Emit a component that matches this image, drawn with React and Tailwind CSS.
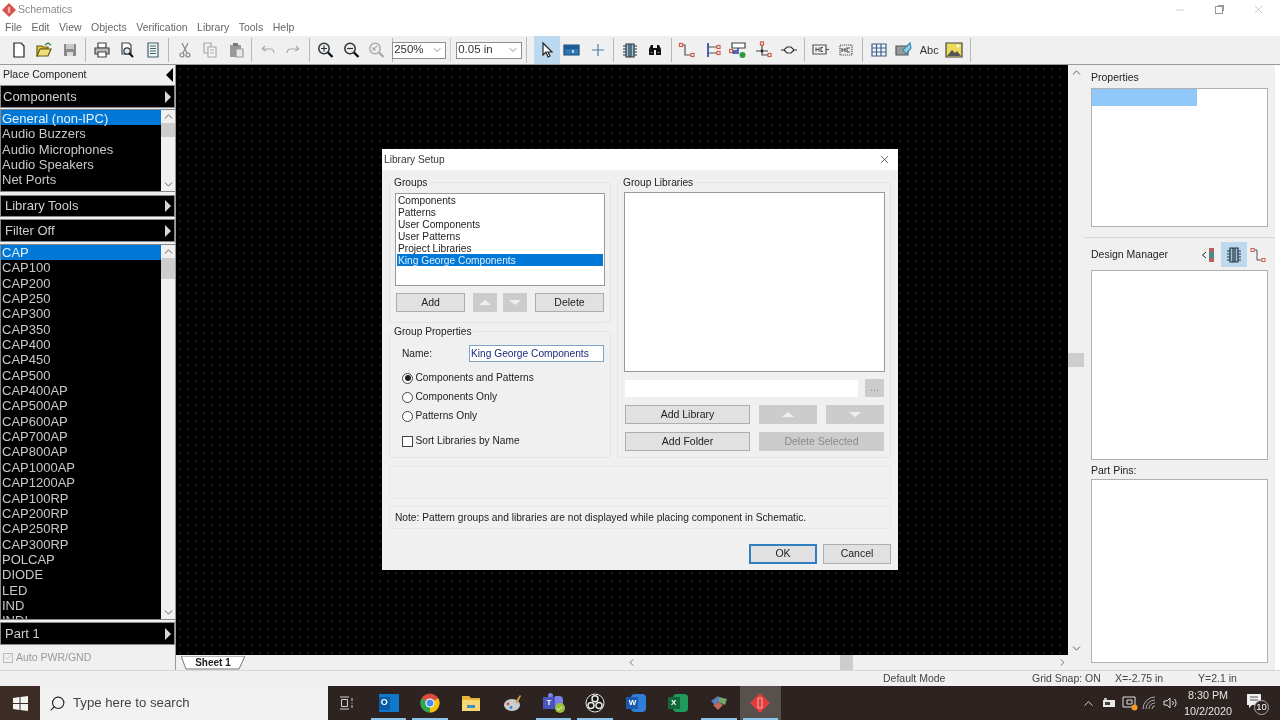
import React from "react";
import {
  ChevronDown,
  ChevronUp,
  ChevronLeft,
  ChevronRight,
  Search,
  Minus,
  X,
  Check,
} from "lucide-react";

const FONT = "font-['Liberation_Sans','Arial',sans-serif]";

const Slot = ({ children, active }) => (
  <div className={`flex h-[28px] shrink-0 items-center justify-center ${active ? "w-[26px] bg-[#bcd9f0]" : "w-[25.3px]"}`}>
    {children}
  </div>
);

const Sep = () => (
  <div className="flex h-[28px] w-[7px] shrink-0 justify-center py-[2px]">
    <div className="w-px bg-[#b8b8b8]" />
  </div>
);

const Ico = ({ children, size = 18 }) => (
  <svg width={size} height={size} viewBox="0 0 18 18" fill="none" strokeWidth="1.2">
    {children}
  </svg>
);

const toolGroups = [
  [
    <Ico><path d="M4 2h7l3 3v11H4z" fill="#fff" stroke="#222" /></Ico>,
    <Ico><path d="M2 5h5l1 1h5v2H6l-3 7H2z" fill="#e8c84a" stroke="#665a10" /><path d="M5 8h11l-3 7H2z" fill="#f3de7c" stroke="#665a10" /><path d="M10 4l3-2 3 2" stroke="#2c7a2c" /></Ico>,
    <Ico><path d="M3 3h12v12H3z" fill="#8a8a8a" /><path d="M5 3h8v5H5z" fill="#c8c8c8" /><path d="M6 11h6v4H6z" fill="#dcdcdc" /></Ico>,
  ],
  [
    <Ico><path d="M5 2h8v5H5z" fill="#fff" stroke="#444" /><path d="M2 7h14v6H2z" fill="#bbb" stroke="#444" /><path d="M5 11h8v5H5z" fill="#fff" stroke="#444" /></Ico>,
    <Ico><path d="M4 2h7l2 2v9H4z" fill="#fff" stroke="#444" /><circle cx="9" cy="10" r="3.2" fill="#dcebf5" stroke="#333" /><path d="M11 12l4 4" stroke="#111" strokeWidth="2" /></Ico>,
    <Ico><path d="M4 2h10v14H4z" fill="#eef5f5" stroke="#44606a" /><path d="M6 5h6M6 7.5h6M6 10h6M6 12.5h6" stroke="#44606a" /></Ico>,
  ],
  [
    <Ico><circle cx="6" cy="14" r="2" stroke="#888" /><circle cx="12" cy="14" r="2" stroke="#888" /><path d="M7 12L12 2M11 12L6 2" stroke="#888" /></Ico>,
    <Ico><path d="M3 2h7v10H3z" fill="#eee" stroke="#aaa" /><path d="M7 6h8v10H7z" fill="#f5f5f5" stroke="#aaa" /><path d="M9 9h4M9 12h4" stroke="#aaa" /></Ico>,
    <Ico><path d="M3 4h11v12H3z" fill="#9a9a9a" /><path d="M6 2h5v3H6z" fill="#777" /><path d="M9 8h7v8H9z" fill="#e8e8e8" stroke="#999" /></Ico>,
  ],
  [
    <Ico><path d="M3 8l3-3M3 8l4 2M3 8h8c3 0 4 2 4 4" stroke="#aaa" /></Ico>,
    <Ico><path d="M15 8l-3-3M15 8l-4 2M15 8H7c-3 0-4 2-4 4" stroke="#aaa" /></Ico>,
  ],
  [
    <Ico><circle cx="8" cy="7.5" r="5.2" fill="#e6f0f6" stroke="#333" strokeWidth="1.5" /><path d="M5 7.5h6M8 4.5v6" stroke="#333" /><path d="M12 11.5l4.5 4.5" stroke="#111" strokeWidth="2.4" /></Ico>,
    <Ico><circle cx="8" cy="7.5" r="5.2" fill="#e6f0f6" stroke="#333" strokeWidth="1.5" /><path d="M5 7.5h6" stroke="#333" /><path d="M12 11.5l4.5 4.5" stroke="#111" strokeWidth="2.4" /></Ico>,
    <Ico><circle cx="8" cy="7.5" r="5.2" fill="#f2f2f2" stroke="#aaa" strokeWidth="1.5" /><path d="M10 5L6 9M6 6v3h3" stroke="#aaa" /><path d="M12 11.5l4.5 4.5" stroke="#aaa" strokeWidth="2.4" /></Ico>,
  ],
];

const pickTools = [
  <Ico><path d="M5 2v12l3-3 2 5 2-1-2-4h4z" fill="#fff" stroke="#222" /></Ico>,
  <Ico><path d="M1 4h15v10H1z" fill="#2f78b8" stroke="#1b4a78" /><path d="M2 5h13v3H2z" fill="#1d5a94" /><path d="M10 9v3M9 10h1" stroke="#fff" /></Ico>,
  <Ico><path d="M9 3v12M3 9h12" stroke="#4a7fa8" /></Ico>,
];

const wireTools = [
  <Ico><path d="M3 4h4v10h7" stroke="#555" /><rect x="1.5" y="2.5" width="3" height="3" fill="#fff" stroke="#d05a4a" /><rect x="13" y="12.5" width="3" height="3" fill="#fff" stroke="#d05a4a" /></Ico>,
  <Ico><path d="M4 2v14" stroke="#1c3fa8" strokeWidth="1.6" /><path d="M4 6h9M4 12h9" stroke="#555" /><rect x="13" y="4.5" width="3" height="3" fill="#fff" stroke="#d05a4a" /><rect x="13" y="10.5" width="3" height="3" fill="#fff" stroke="#d05a4a" /></Ico>,
  <Ico><path d="M3 2h13v5H3z" fill="#fff" stroke="#444" /><path d="M9 7v3H4v2h6" stroke="#1c3fa8" strokeWidth="1.4" /><rect x="0.5" y="8.5" width="3" height="3" fill="#fff" stroke="#d05a4a" /><circle cx="13.5" cy="14" r="3" fill="#2f9a3c" /></Ico>,
  <Ico><path d="M8 4v10h6M2 10h12" stroke="#444" /><rect x="6.5" y="1" width="3" height="3" fill="#fff" stroke="#d05a4a" /><circle cx="8" cy="10" r="1.4" fill="#222" /><rect x="14" y="12.5" width="3" height="3" fill="#fff" stroke="#d05a4a" /></Ico>,
  <Ico><path d="M1 9h3l3-3h4l3 3h3M4 9l3 3h4l3-3" stroke="#333" /></Ico>,
];

const chipTools = [
  <Ico><path d="M1 4h13v9H1z" fill="#eef2f5" stroke="#555" /><path d="M14 8.5h3" stroke="#555" /><path d="M4 6.5v4M7 6.5v4M4 8.5h3M11 6.5H9v4h2" stroke="#555" /></Ico>,
  <Ico><path d="M3 4h12v10H3z" fill="#eee" stroke="#555" strokeDasharray="1.2 0.8" /><path d="M5 7v4M8 7v4M5 9h3M13 7h-3v4h3" stroke="#555" /></Ico>,
];

const miscTools = [
  <Ico><path d="M2 3h14v12H2z" fill="#f2f6fa" stroke="#3d5f8a" /><path d="M2 7h14M2 11h14M6.5 3v12M11 3v12" stroke="#3d5f8a" /></Ico>,
  <Ico><path d="M1 5h12v9H1z" fill="#9a9a9a" stroke="#555" /><path d="M8 9l7-7 1 5-5 6z" fill="#8fd0e4" stroke="#3a8aa8" /></Ico>,
  null,
  <Ico><path d="M1 2h16v14H1z" fill="#eadb5a" stroke="#444" /><path d="M2 15l5-6 3 3 2-2 4 5z" fill="#555" /><circle cx="13" cy="5" r="1.4" fill="#fff" /></Ico>,
];

const Combo = ({ value, className }) => (
  <div className={`flex h-[17px] shrink-0 items-center justify-between border border-[#8e8e8e] bg-white pl-[1px] pr-[2px] text-[11.5px] text-[#333] ${className}`}>
    <span>{value}</span>
    <ChevronDown size={12} strokeWidth={1.3} className="text-[#555]" />
  </div>
);

const BlackBar = ({ label, className = "" }) => (
  <div className={`flex items-center justify-between border border-[#8a8a8a] bg-black pl-[4px] pr-[3px] text-[13px] text-[#cfcfcf] ${className}`}>
    <span>{label}</span>
    <div className="h-0 w-0 border-y-[6px] border-l-[6px] border-y-transparent border-l-[#d8d8d8]" />
  </div>
);

const ListBox = ({ items, className = "", thumbH = "h-[14px]", rowLeading = "leading-[15.35px]" }) => (
  <div className={`flex overflow-hidden border-y border-l border-[#888] ${className}`}>
    <div className="w-[160px] shrink-0 overflow-hidden bg-black pl-[1px] text-[13px] text-[#c8c8c8]">
      {items.map((it, i) => (
        <div key={it} className={`h-[15.35px] whitespace-nowrap ${rowLeading} ${i === 0 ? "-ml-[1px] bg-[#0078d7] pl-[1px] text-[#e4f0fa]" : ""}`}>
          {it}
        </div>
      ))}
    </div>
    <div className="flex flex-1 flex-col items-center bg-[#f0f0f0] text-[#444]">
      <ChevronUp size={13} strokeWidth={1.5} />
      <div className={`w-full bg-[#cdcdcd] ${thumbH}`} />
      <div className="flex-1" />
      <ChevronDown size={13} strokeWidth={1.5} />
    </div>
  </div>
);

const Btn = ({ children, className = "", disabled }) => (
  <div className={`flex items-center justify-center text-[10.5px] ${disabled ? "bg-[#cccccc] text-[#8a8a8a]" : "border border-[#adadad] bg-[#e1e1e1] text-[#222]"} ${className}`}>
    {children}
  </div>
);

const Arrow = ({ up }) => (
  <div className={`h-0 w-0 border-x-[6px] border-x-transparent ${up ? "border-b-[5px] border-b-[#f0f0f0]" : "border-t-[5px] border-t-[#f0f0f0]"}`} />
);

const Radio = ({ label, checked, className = "" }) => (
  <div className={`flex h-[14px] items-center gap-[2.5px] ${className}`}>
    <div className="flex h-[11px] w-[11px] items-center justify-center rounded-full border border-[#444] bg-white">
      {checked && <div className="h-[6px] w-[6px] rounded-full bg-[#222]" />}
    </div>
    <span>{label}</span>
  </div>
);

const Legend = ({ children, className = "ml-[2px]" }) => (
  <div className={`-mt-[7px] w-fit bg-[#f0f0f0] px-[2px] leading-[13px] ${className}`}>{children}</div>
);

const LibraryDialog = () => (
  <div className="absolute left-[382px] top-[149px] flex h-[421px] w-[516px] flex-col bg-[#f0f0f0] text-[10.2px] text-[#222]">
    <div className="flex h-[21px] items-center justify-between bg-white pl-[2px] pr-[7px] text-[#333]">
      <span>Library Setup</span>
      <X size={13} strokeWidth={1.2} className="text-[#222]" />
    </div>
    <div className="flex flex-col px-[7px]">
      <div className="mt-[12px] flex gap-[6px]">
        <div className="flex h-[276px] w-[222px] flex-col gap-[8px]">
          <div className="h-[141px] shrink-0 rounded-sm border border-[#e4e4e4]">
            <Legend>Groups</Legend>
            <div className="mx-[5px] mt-[4px] h-[93px] border border-[#999] bg-white pl-[1px] leading-[14px]">
              <div className="pl-[1px]">
                <div className="h-[12px]">Components</div>
                <div className="h-[12px]">Patterns</div>
                <div className="h-[12px]">User Components</div>
                <div className="h-[12px]">User Patterns</div>
                <div className="h-[12px]">Project Libraries</div>
              </div>
              <div className="mr-[1px] h-[12px] bg-[#0078d7] pl-[1px] text-[#dfeefa]">King George Components</div>
            </div>
            <div className="ml-[6px] mt-[7px] flex h-[19px]">
              <Btn className="w-[69px]">Add</Btn>
              <Btn disabled className="ml-[8px] w-[24px]"><Arrow up /></Btn>
              <Btn disabled className="ml-[6px] w-[24px]"><Arrow /></Btn>
              <Btn className="ml-[8px] w-[69px]">Delete</Btn>
            </div>
          </div>
          <div className="h-[127px] shrink-0 rounded-sm border border-[#e4e4e4]">
            <Legend>Group Properties</Legend>
            <div className="ml-[12px] mt-[7px] flex items-center">
              <span className="w-[67px]">Name:</span>
              <div className="flex h-[17px] w-[135px] items-center border border-[#7aa5c6] bg-white pl-[1px] text-[#1c2a7a]">King George Components</div>
            </div>
            <Radio checked label="Components and Patterns" className="ml-[12px] mt-[9px]" />
            <Radio label="Components Only" className="ml-[12px] mt-[5px]" />
            <Radio label="Patterns Only" className="ml-[12px] mt-[5px]" />
            <div className="ml-[12px] mt-[11px] flex h-[14px] items-center gap-[2.5px]">
              <div className="h-[11px] w-[11px] border border-[#444] bg-white" />
              <span>Sort Libraries by Name</span>
            </div>
          </div>
        </div>
        <div className="h-[276px] w-[274px] rounded-sm border border-[#e4e4e4]">
          <Legend className="ml-[3px]">Group Libraries</Legend>
          <div className="ml-[6px] mt-[3px] h-[180px] w-[261px] border border-[#999] bg-white" />
          <div className="ml-[7px] mt-[7px] flex items-center">
            <div className="h-[17px] w-[233px] bg-white" />
            <Btn disabled className="ml-[7px] h-[18px] w-[19px]">...</Btn>
          </div>
          <div className="ml-[7px] mt-[8px] flex h-[19px]">
            <Btn className="w-[125px]">Add Library</Btn>
            <Btn disabled className="ml-[9px] w-[58px]"><Arrow up /></Btn>
            <Btn disabled className="ml-[9px] w-[58px]"><Arrow /></Btn>
          </div>
          <div className="ml-[7px] mt-[8px] flex h-[19px]">
            <Btn className="w-[125px]">Add Folder</Btn>
            <Btn disabled className="ml-[9px] w-[125px]">Delete Selected</Btn>
          </div>
        </div>
      </div>
      <div className="mt-[8px] h-[33px] border border-[#e8e8e8]" />
      <div className="mt-[7px] flex h-[23px] items-center border border-[#e8e8e8] pl-[5px] pt-[1px]">
        Note: Pattern groups and libraries are not displayed while placing component in Schematic.
      </div>
      <div className="mt-[15px] flex justify-end gap-[6px]">
        <Btn className="h-[20px] w-[68px] !border-2 !border-[#2f7fc1]">OK</Btn>
        <Btn className="h-[20px] w-[68px]">Cancel</Btn>
      </div>
    </div>
  </div>
);

const Underlined = ({ children, active, on }) => (
  <div className={`relative flex h-full w-[41.3px] items-center justify-center ${active ? "bg-[#57504d]" : ""}`}>
    {children}
    {on && <div className="absolute inset-x-[3px] bottom-0 h-[2px] bg-[#8cc4ec]" />}
  </div>
);

const Taskbar = () => (
  <div className="flex h-[34px] shrink-0 items-center bg-[#2d2421] text-[#e8e6e4]">
    <div className="flex h-full w-[40px] items-center justify-center bg-[#3d2c25]">
      <svg width="15" height="15" viewBox="0 0 15 15" fill="#f4f4f4">
        <path d="M0 2l6.5-1v6H0zM7.5 1L15 0v7H7.5zM0 8h6.5v6L0 13zM7.5 8H15v7l-7.5-1z" />
      </svg>
    </div>
    <div className="flex h-full w-[288px] items-center bg-[#f2f2f2] pl-[9px] text-[13.2px] text-[#444]">
      <Search size={17} strokeWidth={1.6} className="-scale-x-100 text-[#222]" />
      <span className="ml-[7px]">Type here to search</span>
    </div>
    <div className="flex w-[36px] justify-center pl-[1px]">
      <svg width="16" height="14" viewBox="0 0 16 14" fill="none" stroke="#cfcfcf"><path d="M1 1h9M1 13h9M2.5 3.5h6v7h-6zM13 2v3M13 6.5v1M13 9v3" /></svg>
    </div>
    <div className="ml-[4px] flex h-full">
      <Underlined on>
        <div className="relative flex h-[18px] w-[20px] items-center"><div className="h-[18px] w-full bg-[#0f78c8]" /><div className="absolute left-0 flex h-[13px] w-[11px] items-center justify-center bg-[#0a5aa8] text-[9px] font-bold text-white">O</div></div>
      </Underlined>
      <Underlined on>
        <svg width="20" height="20" viewBox="0 0 20 20"><circle cx="10" cy="10" r="9.5" fill="#dd4b3e" /><path d="M10 10L1.7 5.2A9.5 9.5 0 0 0 10 19.5z" fill="#2fa750" /><path d="M10 10l8.2-4.8A9.5 9.5 0 0 1 10 19.5z" fill="#f4c20d" /><circle cx="10" cy="10" r="4.6" fill="#fff" /><circle cx="10" cy="10" r="3.5" fill="#4a8bf0" /></svg>
      </Underlined>
      <Underlined>
        <svg width="20" height="18" viewBox="0 0 20 18"><path d="M1 2h7l2 2h9v4H1z" fill="#e8b43a" /><path d="M1 6h18v11H1z" fill="#f8d775" /><path d="M6 11h8v3H6z" fill="#3f8ec9" /></svg>
      </Underlined>
      <Underlined>
        <svg width="20" height="20" viewBox="0 0 20 20"><ellipse cx="9" cy="12" rx="8" ry="6" fill="#c9ced2" /><circle cx="5" cy="11" r="1.4" fill="#d9483b" /><circle cx="8" cy="14.5" r="1.4" fill="#3b7fd9" /><path d="M12 9l5-7 1 1-4 8z" fill="#d9a04a" /></svg>
      </Underlined>
      <Underlined on>
        <div className="relative h-[20px] w-[22px]"><div className="absolute right-[2px] top-[3px] h-[12px] w-[10px] rounded-sm bg-[#7b83eb]" /><div className="absolute left-[5px] top-0 h-[5px] w-[5px] rounded-full bg-[#7b83eb]" /><div className="absolute left-0 top-[4px] flex h-[12px] w-[12px] items-center justify-center bg-[#4b53bc] text-[8px] font-bold text-white">T</div><div className="absolute bottom-0 right-0 flex h-[10px] w-[10px] items-center justify-center rounded-full bg-[#9bc23c]"><Check size={7} strokeWidth={3} className="text-white" /></div></div>
      </Underlined>
      <Underlined on>
        <svg width="20" height="20" viewBox="0 0 20 20" fill="none"><circle cx="10" cy="10" r="9" fill="#1b1716" stroke="#e8e8e8" /><circle cx="10" cy="5.8" r="3" stroke="#e8e8e8" strokeWidth="1.5" /><circle cx="6" cy="12.5" r="3" stroke="#e8e8e8" strokeWidth="1.5" /><circle cx="14" cy="12.5" r="3" stroke="#e8e8e8" strokeWidth="1.5" /></svg>
      </Underlined>
      <Underlined>
        <div className="relative h-[18px] w-[20px]"><div className="absolute right-0 h-full w-[15px] rounded-sm bg-[#2f7fd6]" /><div className="absolute left-0 top-[3px] flex h-[12px] w-[12px] items-center justify-center bg-[#1c5ab0] text-[8px] font-bold text-white">W</div></div>
      </Underlined>
      <Underlined>
        <div className="relative h-[18px] w-[20px]"><div className="absolute right-0 h-full w-[15px] rounded-sm bg-[#1f9a5a]" /><div className="absolute left-0 top-[3px] flex h-[12px] w-[12px] items-center justify-center bg-[#11693a] text-[8px] font-bold text-white">X</div></div>
      </Underlined>
      <Underlined on>
        <svg width="20" height="18" viewBox="0 0 20 18"><path d="M2 7l7-5 3 4-6 5z" fill="#5a7fc0" /><path d="M10 3l8 2-2 6-6-3z" fill="#6fa86a" /><path d="M4 11l6-3 4 3-5 5z" fill="#c26a5a" /></svg>
      </Underlined>
      <Underlined on active>
        <svg width="20" height="20" viewBox="0 0 20 20"><path d="M10 0l10 10-10 10L0 10z" fill="#e03c3c" /><path d="M8 5h4v10H8z" fill="none" stroke="#f4b0a8" /></svg>
      </Underlined>
    </div>
    <div className="flex-1" />
    <div className="flex h-full items-center">
      <ChevronUp size={15} strokeWidth={1.5} className="mr-[6px] text-[#ddd]" />
      <svg width="14" height="10" viewBox="0 0 14 10" className="mr-[6px]"><path d="M1 2h12v7H1z" fill="#e8e8e8" /><path d="M2 0h3v2H2z" fill="#bbb" /><path d="M3 4h5v3H3z" fill="#444" /></svg>
      <svg width="16" height="16" viewBox="0 0 16 16" className="mr-[4px]"><path d="M1 2h12v10H1z" fill="none" stroke="#ddd" /><path d="M5 5h5v4H5z" fill="none" stroke="#ddd" /><circle cx="12.5" cy="12.5" r="3" fill="#f59a23" /></svg>
      <svg width="14" height="14" viewBox="0 0 14 14" fill="none" stroke="#aaa" className="mr-[7px]"><path d="M1 13a12 12 0 0 1 12-12M4 13a9 9 0 0 1 9-9M7 13a6 6 0 0 1 6-6M10 13a3 3 0 0 1 3-3" /></svg>
      <svg width="15" height="14" viewBox="0 0 15 14" fill="none" stroke="#ddd"><path d="M1 5h3l3-3v10L4 9H1zM9.5 5a3 3 0 0 1 0 4M11.5 3a6 6 0 0 1 0 8" /></svg>
      <div className="ml-[3px] flex w-[54px] flex-col items-center text-[10.8px] leading-[16px] text-[#e6e4e2]">
        <span>8:30 PM</span>
        <span>10/2/2020</span>
      </div>
      <div className="relative ml-[11px] mr-[14px] h-[20px] w-[20px]">
        <svg width="15" height="15" viewBox="0 0 15 15" className="absolute left-[1px] top-[1px]"><path d="M0 0h14v11H5l-3 3v-3H0z" fill="#efefef" /><path d="M3 3h8M3 6h8" stroke="#555" /></svg>
        <div className="absolute bottom-[-2px] right-[-3px] flex h-[15px] w-[15px] items-center justify-center rounded-full border border-[#aaa] bg-[#2d2421] text-[9.5px] text-white">10</div>
      </div>
    </div>
  </div>
);

export default function App() {
  const groupsA = ["General (non-IPC)", "Audio Buzzers", "Audio Microphones", "Audio Speakers", "Net Ports", "RCA Sound Cards"];
  const parts = [
    "CAP", "CAP100", "CAP200", "CAP250", "CAP300", "CAP350", "CAP400", "CAP450", "CAP500", "CAP400AP", "CAP500AP", "CAP600AP",
    "CAP700AP", "CAP800AP", "CAP1000AP", "CAP1200AP", "CAP100RP", "CAP200RP", "CAP250RP", "CAP300RP", "POLCAP", "DIODE", "LED", "IND", "INDI",
  ];

  return (
    <div className={`relative flex h-[720px] w-[1280px] flex-col overflow-hidden bg-white blur-[0.35px] ${FONT}`}>
      {/* title + menu */}
      <div className="flex h-[18px] shrink-0 items-center justify-between pl-[2px] pr-[15.5px] pt-[1px] text-[10.5px] text-[#8a8a8a]">
        <div className="flex items-center gap-[2px]">
          <svg width="14" height="14" viewBox="0 0 14 14"><path d="M7 0l7 7-7 7-7-7z" fill="#d9534a" /><path d="M5.8 4h2.4v6H5.8z" fill="#f2b6ae" /></svg>
          <span>Schematics</span>
        </div>
        <div className="flex items-center gap-[29px] text-[#9a9a9a]">
          <Minus size={12} strokeWidth={1} />
          <div className="relative h-[8px] w-[8px] border border-[#999] bg-white shadow-[2px_-2px_0_-1px_#999]" />
          <X size={13} strokeWidth={1} />
        </div>
      </div>
      <div className="flex h-[18px] shrink-0 items-center gap-[9.5px] pl-[5px] pt-[1px] text-[10.5px] text-[#666]">
        {["File", "Edit", "View", "Objects", "Verification", "Library", "Tools", "Help"].map((m) => (
          <span key={m}>{m}</span>
        ))}
      </div>

      {/* toolbar */}
      <div className="flex h-[29px] shrink-0 items-center border-b border-[#9a9a9a] bg-[#f0f0f0] pl-[6.5px]">
        {toolGroups.map((g, i) => (
          <React.Fragment key={i}>
            {g.map((ic, j) => <Slot key={j}>{ic}</Slot>)}
            <Sep />
          </React.Fragment>
        ))}
        <Combo value="250%" className="ml-[-3.5px] w-[54px]" />
        <div className="ml-[4px] mr-[5px] h-[24px] w-px bg-[#cfcfcf]" />
        <Combo value="0.05 in" className="w-[66px]" />
        <div className="ml-[4px] mr-[6.5px] h-[26px] w-px bg-[#bbb]" />
        {pickTools.map((ic, j) => <Slot key={j} active={j === 0}>{ic}</Slot>)}
        <Sep />
        <Slot><Ico><path d="M5 3h8v13H5z" fill="#8fc8e8" stroke="#333" /><path d="M2 5h3M2 8h3M2 11h3M2 14h3M13 5h3M13 8h3M13 11h3M13 14h3M8 3v13M10 3v13" stroke="#333" /></Ico></Slot>
        <Slot><Ico><path d="M3 8l2-4h2v3h4V4h2l2 4v6h-5V9H8v5H3z" fill="#111" /><path d="M4.5 11.5h2M11.5 11.5h2" stroke="#777" /></Ico></Slot>
        <Sep />
        {wireTools.map((ic, j) => <Slot key={j}>{ic}</Slot>)}
        <Sep />
        {chipTools.map((ic, j) => <Slot key={j}>{ic}</Slot>)}
        <Sep />
        {miscTools.map((ic, j) => (
          <Slot key={j}>{ic || <span className="text-[11px] text-[#333]">Abc</span>}</Slot>
        ))}
        <Sep />
      </div>

      {/* main */}
      <div className="flex min-h-0 flex-1">
        <div className="flex w-[176px] shrink-0 flex-col border-r border-[#999] bg-[#f0f0f0]">
          <div className="flex h-[19px] shrink-0 items-center justify-between pl-[3px] pr-[2px] text-[10.5px] text-[#222]">
            <span>Place Component</span>
            <div className="h-0 w-0 border-y-[7px] border-r-[7px] border-y-transparent border-r-black" />
          </div>
          <BlackBar label="Components" className="mt-[1px] h-[23px] shrink-0 !pl-[2px]" />
          <ListBox items={groupsA} className="mt-[1px] h-[83px] shrink-0" thumbH="h-[14px]" rowLeading="leading-[17px]" />
          <BlackBar label="Library Tools" className="mt-[3px] h-[22px] shrink-0" />
          <BlackBar label="Filter Off" className="mt-[2px] h-[23px] shrink-0" />
          <ListBox items={parts} className="mt-[2px] h-[376px] shrink-0" thumbH="h-[21px]" />
          <BlackBar label="Part 1" className="mt-[2px] h-[23px] shrink-0" />
          <div className="flex flex-1 items-center gap-[3px] pl-[3px] text-[10.5px] text-[#999]">
            <div className="flex h-[10px] w-[10px] items-center justify-center border border-[#bbb] bg-[#eee]"><Check size={9} className="text-[#bbb]" /></div>
            <span>Auto PWR/GND</span>
          </div>
        </div>

        <div className="flex min-w-0 flex-1 flex-col">
          <div className="flex min-h-0 flex-1">
            <div className="flex-1 bg-black bg-[radial-gradient(circle,#303030_0.6px,transparent_0.8px)] bg-[length:8px_8px]" />
            <div className="flex w-[16px] shrink-0 flex-col items-center bg-[#f0f0f0] text-[#444]">
              <ChevronUp size={13} strokeWidth={1.5} className="mt-[1px]" />
              <div className="mt-[274px] h-[14px] w-full bg-[#cdcdcd]" />
              <div className="flex-1" />
              <ChevronDown size={13} strokeWidth={1.5} />
            </div>
          </div>
          <div className="flex h-[15px] shrink-0 items-center bg-[#f0f0f0] text-[#444]">
            <div className="relative ml-[5px] flex h-[14px] w-[64px] items-center justify-center text-[10px] font-bold text-[#222]">
              <svg width="64" height="14" viewBox="0 0 64 14" className="absolute inset-0">
                <path d="M0 0l5 13h53l6-13z" fill="#fff" stroke="#777" />
              </svg>
              <span className="relative">Sheet 1</span>
            </div>
            <div className="ml-[381px] flex w-[214px] items-center">
              <ChevronLeft size={11} strokeWidth={1.6} />
            </div>
            <div className="h-[15px] w-[13px] bg-[#cdcdcd]" />
            <div className="flex-1" />
            <ChevronRight size={11} strokeWidth={1.6} className="mr-[16px]" />
          </div>
        </div>

        <div className="flex w-[196px] shrink-0 bg-white">
          <div className="flex w-[191px] flex-col bg-[#f0f0f0] pl-[7px] pr-[7px] text-[10.5px] text-[#222]">
            <div className="mt-[6px] h-[13px] leading-[13px]">Properties</div>
            <div className="mt-[4px] h-[139px] border border-[#b0b0b0] bg-white">
              <div className="h-[17px] w-[105px] bg-[#90c8fa]" />
            </div>
            <div className="-mx-[7px] mt-[10px] h-px bg-[#d8d8d8]" />
            <div className="flex h-[32px] items-center">
              <span className="flex-1 pt-[1px]">Design Manager</span>
              <div className="flex items-center pt-[1px]">
                <svg width="16" height="16" viewBox="0 0 16 16" fill="none"><path d="M5 5L1.5 8 5 11" stroke="#222" /><path d="M8 1h5v14H8z" fill="#4a8a8a" /><path d="M8 1h5v4H8zM8 11h5v4H8z" fill="#b9605a" /></svg>
                <div className="ml-[4px] flex h-[25px] w-[26px] items-center justify-center bg-[#bcd9f0]">
                  <Ico><path d="M5 2h8v14H5z" fill="#8fc8e8" stroke="#333" /><path d="M2 5h3M2 8h3M2 11h3M2 14h3M13 5h3M13 8h3M13 11h3M13 14h3M8 2v14M10 2v14" stroke="#333" /></Ico>
                </div>
                <div className="ml-[3px] mr-[2px]">
                  <svg width="16" height="16" viewBox="0 0 16 16" fill="none"><path d="M3 3h4v10h6" stroke="#555" /><rect x="1" y="1.5" width="3" height="3" fill="#fff" stroke="#d05a4a" /><rect x="12" y="11.5" width="3" height="3" fill="#fff" stroke="#d05a4a" /></svg>
                </div>
              </div>
            </div>
            <div className="h-[190px] border border-[#b0b0b0] bg-white" />
            <div className="mt-[2px] h-[16px] leading-[16px]">Part Pins:</div>
            <div className="mt-[1px] h-[184px] border border-[#b0b0b0] bg-white" />
          </div>
        </div>
      </div>

      {/* status bar */}
      <div className="flex h-[16px] shrink-0 items-center border-t border-[#d8d8d8] bg-[#f0f0f0] text-[10.5px] text-[#444]">
        <span className="ml-[883px] w-[149px]">Default Mode</span>
        <span className="w-[83px]">Grid Snap: ON</span>
        <span className="w-[83px]">X=-2.75 in</span>
        <span>Y=2.1 in</span>
      </div>

      <Taskbar />
      <LibraryDialog />
    </div>
  );
}
